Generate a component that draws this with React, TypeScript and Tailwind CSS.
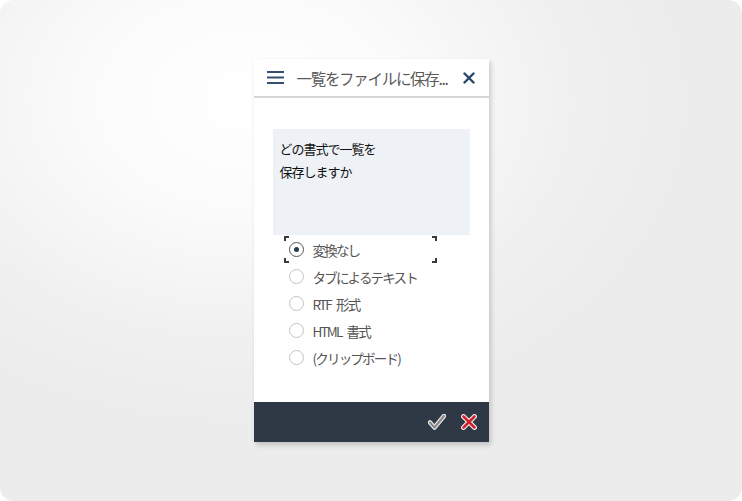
import { useState } from 'react'

const options = ['変換なし', 'タブによるテキスト', 'RTF\u2002形式', 'HTML\u2002書式', '(クリップボード)']

function Corner({ pos }: { pos: string }) {
  return <span className={`absolute w-[5px] h-[5px] border-[#3a3a3a] ${pos}`} />
}

export default function App() {
  const [selected, setSelected] = useState(0)

  return (
    <div className="w-[742px] h-[501px] bg-white" style={{ fontFamily: '"Noto Sans CJK JP", "Noto Sans", sans-serif' }}>
      <div className="w-full h-full rounded-[14px] flex items-center justify-center bg-[#eeeeee] bg-[radial-gradient(ellipse_440px_320px_at_33%_20%,#ffffff_0%,#fbfbfb_35%,#f0f0f0_75%,#ececec_100%)]">
        <div className="w-[235px] h-[383px] bg-white flex flex-col shadow-[2px_3px_5px_rgba(0,0,0,0.18)]">
          {/* header */}
          <div className="h-[39px] flex items-center pl-[13px] pr-[14px] border-b-2 border-[#d6d6d6]">
            <svg width="17" height="13" viewBox="0 0 17 13" className="shrink-0">
              <rect x="0" y="0" width="17" height="2" fill="#34506e" />
              <rect x="0" y="5.5" width="17" height="2" fill="#34506e" />
              <rect x="0" y="11" width="17" height="2" fill="#34506e" />
            </svg>
            <div className="ml-[13px] flex-1 min-w-0 whitespace-nowrap text-[15.5px] leading-[20px] text-[#5a5a5a] tracking-[-1.3px]">
              一覧をファイルに保存...
            </div>
            <svg width="12" height="12" viewBox="0 0 12 12" className="ml-[6px] shrink-0">
              <path d="M1.5 1.5 L10.5 10.5 M10.5 1.5 L1.5 10.5" stroke="#27476a" strokeWidth="2.4" strokeLinecap="round" />
            </svg>
          </div>

          {/* body */}
          <div className="flex-1 pt-[31px] px-[19px]">
            <div className="h-[106px] bg-[#eef2f6] px-[7px] pt-[8px] text-[13px] leading-[23px] text-[#111] tracking-[-1px]">
              <div>どの書式で一覧を</div>
              <div>保存しますか</div>
            </div>
            <div className="pl-[11px] pt-[1px]">
              {options.map((opt, i) => (
                <div
                  key={opt}
                  onClick={() => setSelected(i)}
                  className="relative w-[153px] h-[27px] flex items-center pl-[5px] cursor-pointer"
                >
                  {i === selected && (
                    <>
                      <Corner pos="left-0 top-0 border-l-2 border-t-2" />
                      <Corner pos="right-0 top-0 border-r-2 border-t-2" />
                      <Corner pos="left-0 bottom-0 border-l-2 border-b-2" />
                      <Corner pos="right-0 bottom-0 border-r-2 border-b-2" />
                    </>
                  )}
                  <span
                    className={`w-[15px] h-[15px] rounded-full border flex items-center justify-center shrink-0 ${
                      i === selected ? 'border-[#555]' : 'border-[#c4c4c4]'
                    }`}
                  >
                    {i === selected && <span className="w-[5px] h-[5px] rounded-full bg-[#2b3a4a]" />}
                  </span>
                  <span className="ml-[9px] text-[13.5px] leading-[18px] text-[#555] tracking-[-1.8px] whitespace-nowrap">
                    {opt}
                  </span>
                </div>
              ))}
            </div>
          </div>

          {/* footer */}
          <div className="h-[40px] bg-[#2e3945] flex items-center justify-end pr-[12px] gap-[15px]">
            <svg width="18" height="16" viewBox="0 0 18 16">
              <path d="M2 8.5 L6.5 13.5 L16 2" fill="none" stroke="#e8e8e8" strokeWidth="4.5" strokeLinejoin="round" strokeLinecap="round" />
              <path d="M2 8.5 L6.5 13.5 L16 2" fill="none" stroke="#8a8a8a" strokeWidth="2.2" strokeLinejoin="round" strokeLinecap="round" />
            </svg>
            <svg width="16" height="16" viewBox="0 0 16 16">
              <path d="M2.5 2.5 L13.5 13.5 M13.5 2.5 L2.5 13.5" stroke="#f2f2f2" strokeWidth="4.8" strokeLinecap="round" />
              <path d="M2.5 2.5 L13.5 13.5 M13.5 2.5 L2.5 13.5" stroke="#d0202a" strokeWidth="2.6" strokeLinecap="round" />
            </svg>
          </div>
        </div>
      </div>
    </div>
  )
}
